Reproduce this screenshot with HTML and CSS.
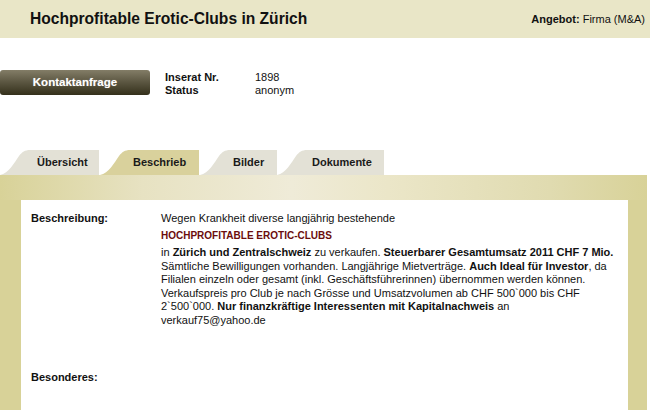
FILE: index.html
```html
<!DOCTYPE html>
<html lang="de">
<head>
<meta charset="utf-8">
<title>Hochprofitable Erotic-Clubs in Zürich</title>
<link rel="stylesheet" href="styles.css">
</head>
<body>
<div class="head">
  <h1>Hochprofitable Erotic-Clubs in Zürich</h1>
  <div class="offer"><b>Angebot:</b> Firma (M&amp;A)</div>
</div>

<div class="inforow">
  <a class="btn" href="#">Kontaktanfrage</a>
  <table class="info">
    <tr><th>Inserat Nr.</th><td>1898</td></tr>
    <tr><th>Status</th><td>anonym</td></tr>
  </table>
</div>

<ul class="tabs">
  <li class="tab t1"><svg class="slant" width="30" height="25" viewBox="0 0 30 25"><path d="M0 25 C9 23 14 13 19 6 C22 2 25 0 30 0 L30 25 Z"/></svg><span>Übersicht</span></li>
  <li class="tab t2 active"><svg class="slant" width="30" height="25" viewBox="0 0 30 25"><path d="M0 25 C9 23 14 13 19 6 C22 2 25 0 30 0 L30 25 Z"/></svg><span>Beschrieb</span></li>
  <li class="tab t3"><svg class="slant" width="30" height="25" viewBox="0 0 30 25"><path d="M0 25 C9 23 14 13 19 6 C22 2 25 0 30 0 L30 25 Z"/></svg><span>Bilder</span></li>
  <li class="tab t4"><svg class="slant" width="30" height="25" viewBox="0 0 30 25"><path d="M0 25 C9 23 14 13 19 6 C22 2 25 0 30 0 L30 25 Z"/></svg><span>Dokumente</span></li>
</ul>

<div class="frame">
  <div class="band"></div>
  <div class="panel">
    <div class="row">
      <div class="lbl">Beschreibung:</div>
      <div class="val">
        Wegen Krankheit diverse langjährig bestehende
        <div class="hl">HOCHPROFITABLE EROTIC-CLUBS</div>
        in <b>Zürich und Zentralschweiz</b> zu verkaufen. <b>Steuerbarer Gesamtumsatz 2011 CHF 7 Mio.</b>
        Sämtliche Bewilligungen vorhanden. Langjährige Mietverträge. <b>Auch Ideal für Investor</b>, da
        Filialen einzeln oder gesamt (inkl. Geschäftsführerinnen) übernommen werden können.
        Verkaufspreis pro Club je nach Grösse und Umsatzvolumen ab CHF 500`000 bis CHF
        2`500`000. <b>Nur finanzkräftige Interessenten mit Kapitalnachweis</b> an
        verkauf75@yahoo.de
      </div>
    </div>
    <div class="row">
      <div class="lbl">Besonderes:</div>
      <div class="val"></div>
    </div>
  </div>
</div>
</body>
</html>
```

FILE: styles.css
```css
body {
margin: 0;
font-family: "Liberation Sans", Arial, Helvetica, sans-serif;
font-size: 11px;
color: #111;
background: #fff;
overflow: hidden;
}

/* ----------- header ----------- */
.head {
display: flex;
justify-content: space-between;
align-items: center;
height: 38px;
padding: 0 5px 0 30px;
background: #e9e6c7;
}
.head h1 {
margin: 0;
font-size: 15.6px;
font-weight: bold;
color: #111;
}
.offer {
font-size: 11px;
}

/* ----------- contact + info ----------- */
.inforow {
display: flex;
align-items: flex-start;
margin-top: 32px;
height: 25px;
}
.btn {
display: block;
width: 150px;
height: 25px;
line-height: 25px;
border-radius: 3px;
background: linear-gradient(#837d67, #5a5540 50%, #34301b);
color: #fff;
font-weight: bold;
font-size: 11.5px;
text-align: center;
text-decoration: none;
text-shadow: 0 0 1px rgba(255,255,255,0.4);
}
.info {
border-collapse: collapse;
margin: 1px 0 0 15px;
}
.info th, .info td {
padding: 0;
line-height: 13px;
text-align: left;
vertical-align: top;
}
.info th {
width: 90px;
font-weight: bold;
}

/* ----------- tabs ----------- */
.tabs {
display: flex;
list-style: none;
margin: 55px 0 0 0;
padding: 0;
height: 25px;
}
.tab {
display: flex;
height: 25px;
}
.slant {
display: block;
fill: #e3e1d6;
}
.tab span {
display: block;
background: #e3e1d6;
line-height: 24px;
font-weight: bold;
color: #1a1a1a;
}
.tab.active .slant { fill: #d9d19c; }
.tab.active span { background: #d9d19c; }
.t1 span { width: 62px; padding-left: 7px; }
.t2 { margin-left: 1px; }
.t2 span { width: 66px; padding-left: 3px; }
.t3 { margin-left: 1px; }
.t3 span { width: 44px; padding-left: 3px; }
.t4 span { width: 72px; padding-left: 5px; }

/* ----------- frame ----------- */
.frame {
width: 647px;
background: #d8d298;
}
.band {
height: 25px;
background: linear-gradient(to right, #d8d298, #e7e2c2 22%, #efebd8 45%, #ebe6c8 60%, #e0dbb0 85%, #d8d298);
}
.panel {
margin: 0 19px 0 21px;
background: #fff;
padding-top: 12px;
height: 198px;
}
.row {
display: flex;
margin-bottom: 44px;
}
.lbl {
width: 130px;
padding-left: 10px;
font-weight: bold;
line-height: 13.5px;
}
.val {
width: 455px;
line-height: 13.5px;
}
.hl {
margin: 3.5px 0;
font-size: 10px;
font-weight: bold;
color: #6b0d0d;
}
```
